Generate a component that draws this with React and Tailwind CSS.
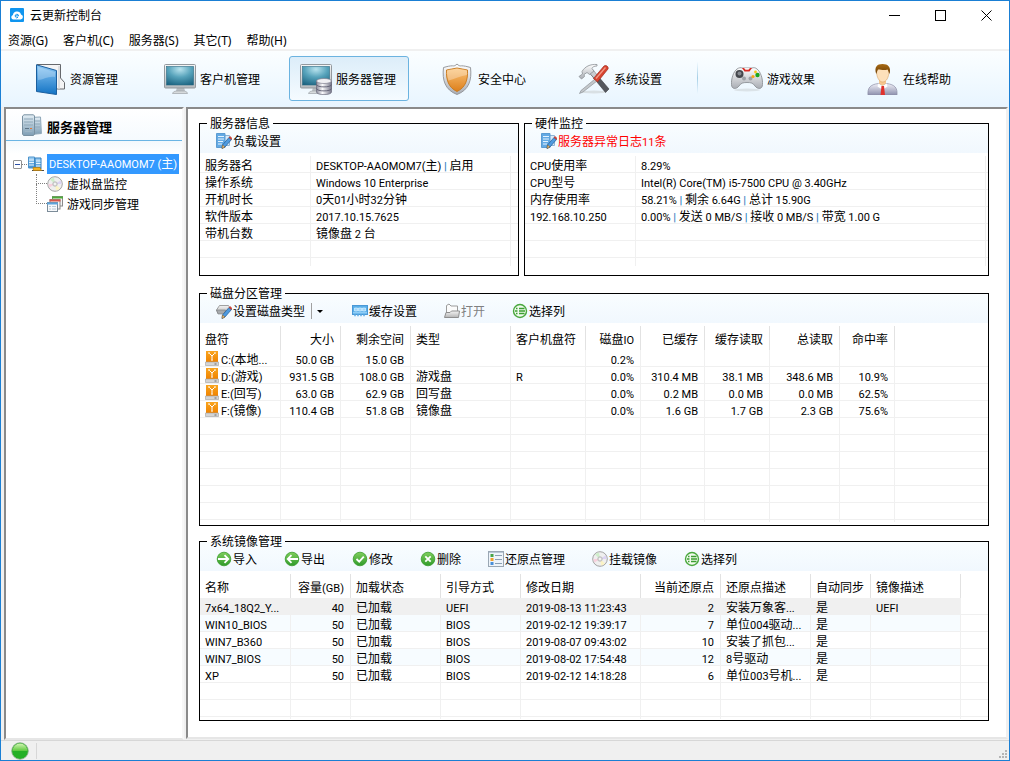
import { Fragment } from 'react'
import clsx from 'clsx'

/* ---------- text ---------- */

// Latin runs are set one size smaller than the Chinese text around them
function Txt({ children }) {
  return children.split(/([\x20-\x7e]+)/).map((part, i) => {
    if (i % 2 === 0) return <Fragment key={i}>{part}</Fragment>
    return (
      <span key={i} className="text-[11px] leading-none whitespace-pre font-[Roboto,sans-serif]">
        {part.split('|').map((s, j) => (
          <Fragment key={j}>
            {j > 0 && <span className="font-bold text-[#2f7fc0]">|</span>}
            {s}
          </Fragment>
        ))}
      </span>
    )
  })
}

/* ---------- icons ---------- */

function Gradients() {
  const vertical = [
    ['gBook', '#8cc8f5', '#1273c4'],
    ['gFrame', '#f6f6f6', '#b4b9bd'],
    ['gOrange', '#fbc377', '#dd7f1b'],
    ['gSilver', '#ffffff', '#a9adb4'],
    ['gSuit', '#f1f1f8', '#8d90ad'],
    ['gGreen', '#7fce5c', '#2f9a2a'],
    ['gDrive', '#f9a51f', '#f08300'],
    ['gServer', '#e3eef5', '#7d9db4'],
    ['gTower', '#a5d3f5', '#3d8fd0'],
    ['gFolder', '#f4f4f4', '#b5b5b5'],
    ['gBall', '#d2f5b4', '#5cc83c'],
    ['gHair', '#a86a14', '#6d3f05'],
  ]
  return (
    <svg className="absolute w-0 h-0" aria-hidden="true">
      <defs>
        {vertical.map(([id, a, b]) => (
          <linearGradient key={id} id={id} x1="0" y1="0" x2="0" y2="1">
            <stop offset="0" stopColor={a} />
            <stop offset="1" stopColor={b} />
          </linearGradient>
        ))}
        <radialGradient id="gScreen" cx="0.5" cy="0.15" r="0.95">
          <stop offset="0" stopColor="#b9e3ee" />
          <stop offset="0.45" stopColor="#57a3bb" />
          <stop offset="1" stopColor="#175f7d" />
        </radialGradient>
        <linearGradient id="gDb" x1="0" y1="0" x2="1" y2="0">
          <stop offset="0" stopColor="#8b8b9b" />
          <stop offset="0.4" stopColor="#fafafc" />
          <stop offset="1" stopColor="#77778a" />
        </linearGradient>
      </defs>
    </svg>
  )
}

function AppIcon() {
  return (
    <svg width="14" height="14" viewBox="0 0 14 14">
      <rect width="14" height="14" rx="1" fill="#0f95ef" />
      <path d="M3.5 11.5a2.3 2.3 0 0 1-.6-4.5A4.2 4.2 0 0 1 11 6.4a2.6 2.6 0 0 1-.4 5.1z" fill="#fff" />
      <path d="M5.2 7.9h3.4a1.7 1.7 0 1 0-.6 1.4" fill="none" stroke="#0f95ef" strokeWidth="1" />
    </svg>
  )
}

function BookIcon() {
  return (
    <svg width="32" height="32" viewBox="0 0 32 32">
      <path d="M3 1.500h23.500v13.500l4 4.500v6.500h-7L3 20z" fill="#f3f4f5" stroke="#66696d" />
      <path d="M25 3v23" stroke="#d5d7d9" strokeWidth="1.500" />
      <path d="M2.500 1.800 22.500 7.500v24L2.500 28.500z" fill="url(#gBook)" stroke="#1b5f9e" />
      <path d="M4 4 21 9v5C14 13 9 17 4 17z" fill="#fff" opacity=".25" />
    </svg>
  )
}

function Monitor() {
  return (
    <>
      <path d="M13 24h7l1 4h-9z" fill="#b9bec2" />
      <path d="M8.500 30.500c1-2.500 3-2.500 7.500-2.500s7 0 7.500 2.500z" fill="#d6dadc" stroke="#9da3a8" strokeWidth=".7" />
      <rect x=".5" y="1.500" width="31" height="23.500" rx="1" fill="url(#gFrame)" stroke="#93999e" />
      <rect x="2.500" y="3.500" width="27" height="18.500" fill="url(#gScreen)" stroke="#2c6c84" strokeWidth=".6" />
    </>
  )
}

function ClientIcon() {
  return (
    <svg width="32" height="32" viewBox="0 0 32 32">
      <Monitor />
    </svg>
  )
}

function ServerIcon() {
  return (
    <svg width="32" height="32" viewBox="0 0 32 32">
      <Monitor />
      <path d="M16.500 18v11c0 3.500 15 3.500 15 0V18z" fill="url(#gDb)" stroke="#6c6c7c" strokeWidth=".7" />
      <path d="M16.500 21.500c0 3.200 15 3.200 15 0M16.500 25.500c0 3.200 15 3.200 15 0" fill="none" stroke="#5e5e70" strokeWidth=".9" />
      <ellipse cx="24" cy="18" rx="7.500" ry="2.500" fill="#f0f0f4" stroke="#80808f" strokeWidth=".7" />
    </svg>
  )
}

function ShieldIcon() {
  const d = 'M15 1c1.500 1.600 3 2.200 4.500 1.800C22 2.800 25 3.500 28.500 4.500 30 17 27 27 15 31.500 3 27 0 17 1.500 4.500 5 3.500 8 2.800 10.500 2.800 12 3.200 13.500 2.600 15 1z'
  return (
    <svg width="32" height="32" viewBox="0 0 32 32">
      <path d={d} fill="url(#gSilver)" stroke="#8d9094" strokeWidth=".9" />
      <path d="M15 5c3.500 1 7 1 10.500 2C26 17 23.500 24.500 15 28.500 6.500 24.500 4 17 4.500 7 8 6 11.500 6 15 5z" fill="url(#gOrange)" stroke="#c77718" strokeWidth=".9" />
      <path d="M15 5.600C11.500 6.600 8 6.600 5 7.500 5 12 5.500 15 6.500 17.500 12 16 19 13 25 12V7.500C22 6.600 18.500 6.600 15 5.600z" fill="#fff" opacity=".3" />
    </svg>
  )
}

function ToolsIcon() {
  return (
    <svg width="32" height="32" viewBox="0 0 32 32">
      <ellipse cx="16" cy="29" rx="13" ry="1.500" fill="#d9e0e4" />
      <path d="m10 8 3.500-2.500L31 26l-3.500 3.500z" fill="#55585e" stroke="#3b3d41" strokeWidth=".6" />
      <path d="M10 8 13.500 5.500 20 13l-3 3z" fill="#c9ccd0" />
      <path d="M1 13.500 4.500 11 4 8.500C7 3.500 12 1 19 1.500L19 3c-3 0-4.500 1-5 2.500l2 2.500-4.500 3.500-2.500-2-3 2 .5 2L3.500 16z" fill="url(#gSilver)" stroke="#8c9096" strokeWidth=".8" />
      <path d="m17 16 2 2L5 29l-3.500 1.500L3 27.500z" fill="#c3c7cb" stroke="#82868b" strokeWidth=".6" />
      <path d="M15.500 15.500 26 3c1.500-1.500 5 .5 4 3L19.500 19z" fill="#d8432f" stroke="#9d2a1b" strokeWidth=".7" />
      <path d="M18 15.500 27.500 4.500" stroke="#f39b88" strokeWidth="1.300" />
    </svg>
  )
}

function GamepadIcon() {
  return (
    <svg width="32" height="32" viewBox="0 0 32 32">
      <ellipse cx="16" cy="27" rx="13" ry="1.500" fill="#dbe3e8" />
      <path d="M6 6C8 4.500 10 4.500 11 5h10c1.500-.6 3.500-.4 5 1C29.500 8.500 32 16 31.500 21.500c0 5-5 5-7.500 1.500C22 20 20 19.500 16 19.500S10 20 8 23C5.500 26.500.5 26.500.5 21.500 0 16 2.500 8.500 6 6z" fill="url(#gSilver)" stroke="#85898e" strokeWidth=".8" />
      <path d="M11 5h10l-2.500 3.500h-5z" fill="#d92b25" />
      <path d="M13 5h6l-1.500 1.800h-3z" fill="#f4f4f4" />
      <circle cx="8.500" cy="11" r="4" fill="#44474c" />
      <circle cx="8.500" cy="10.500" r="2" fill="#85898f" />
      <circle cx="13" cy="15.500" r="2" fill="#9da1a6" />
      <circle cx="19.500" cy="15.500" r="2" fill="#9da1a6" />
      <circle cx="26.500" cy="12" r="2.200" fill="#18a51c" />
      <circle cx="22" cy="13.500" r="1.600" fill="#f5a318" />
      <circle cx="24.500" cy="9" r="1.400" fill="#f5c518" />
    </svg>
  )
}

function PersonIcon() {
  return (
    <svg width="32" height="32" viewBox="0 0 32 32">
      <path d="M12 16h7v5l-3.500 3-3.500-3z" fill="#f5c68f" />
      <path d="M1 32c-.6-7 2-10.500 10.500-11.500l4 3 4-3C28 21.500 30.600 25 30 32z" fill="url(#gSuit)" stroke="#8c8ea6" strokeWidth=".7" />
      <path d="m11.500 20.500 4 2.500 4-2.500 1 3-4 2.500h-2l-4-2.500z" fill="#fff" />
      <path d="M14.500 23h2.500l1 9h-4.500z" fill="#e0312c" />
      <path d="M9.500 8c0-6 12.500-6 12.500 0 0 6-2.500 11-6.200 11S9.500 14 9.500 8z" fill="#fde0ba" stroke="#d9a468" strokeWidth=".6" />
      <path d="M9.200 11C7 4 10 1 15.500 1S24.500 4 22.500 11c-1-2-1-3-2-4.500C17 8 12 6 11 6.500c-1 1.500-1 3-1.800 4.500z" fill="url(#gHair)" />
    </svg>
  )
}

function RackIcon() {
  return (
    <svg width="20" height="22" viewBox="0 0 20 22">
      <path d="M8 3.500 18.500 3l.9 16.500L9 20.500z" fill="url(#gServer)" stroke="#8ea7b8" />
      <path d="M11 7h7M11 10h7M11 13h7" stroke="#8fa8b9" />
      <path d="M.5 2 2 .8h9.500l1 1.200v18l-1 1.500H1.500L.5 20z" fill="url(#gServer)" stroke="#7890a1" />
      <path d="M2 5h9M2 8h9M2 11h9" stroke="#8fa8b9" />
      <path d="M3 14.500h4" stroke="#5e7587" />
      <path d="M8 14.500h2" stroke="#e07a3a" />
      <path d="M3 17.500h7" stroke="#9cb4c4" />
    </svg>
  )
}

function TreeServerIcon() {
  return (
    <svg width="16" height="16" viewBox="0 0 16 16">
      <path d="M.5 1h6v11h-6z" fill="url(#gTower)" stroke="#4c93cc" />
      <path d="M7 2h6v11H7z" fill="url(#gTower)" stroke="#2f7dbd" />
      <path d="M1 4h5M1 6.500h5M1 9h5M8 5h4.500M8 7.500h4.500M8 10h4.500" stroke="#e8f5ff" />
      <path d="M4 14.500h12" stroke="#4a4a4a" />
      <path d="M5 11.500h7l1.500 3h-8z" fill="#f4b223" stroke="#b57a0c" strokeWidth=".7" />
    </svg>
  )
}

function DiscIcon() {
  return (
    <svg width="16" height="16" viewBox="0 0 16 16">
      <circle cx="8" cy="8" r="7.300" fill="#efefef" stroke="#a3a3a3" />
      <path d="M8 8 3 3.500A7 7 0 0 1 7 1.500z" fill="#cfeecb" />
      <path d="m8 8 5.500-3.500A7 7 0 0 1 14.500 8z" fill="#dcd3f3" />
      <path d="m8 8 5 4.500a7 7 0 0 1-4 2z" fill="#fbf3c4" />
      <path d="M8 8 2.500 11.500A7 7 0 0 1 1.500 8z" fill="#f7d0dd" />
      <circle cx="8" cy="8" r="2.300" fill="#d8d8d8" stroke="#b3b3b3" strokeWidth=".7" />
      <circle cx="8" cy="8" r=".9" fill="#fff" />
    </svg>
  )
}

function SyncIcon() {
  return (
    <svg width="16" height="16" viewBox="0 0 16 16">
      <rect x="5.500" y=".5" width="10" height="9.500" fill="#f6f6f6" stroke="#8a8a8a" />
      <path d="M5 1.500h11" stroke="#4faa3a" strokeWidth="2" />
      <rect x="3" y="3.500" width="10" height="9.500" fill="#f6f6f6" stroke="#8a8a8a" />
      <path d="M2.500 4.500h11" stroke="#d8584a" strokeWidth="2" />
      <rect x=".5" y="6.500" width="10" height="9" fill="#f7f9fb" stroke="#7c8c99" />
      <path d="M0 7.500h11" stroke="#5da5dc" strokeWidth="2" />
      <path d="M2 10.500h2M2 13h2M5 10.500h4M5 13h4" stroke="#b9cad6" />
    </svg>
  )
}

function Pencil() {
  return (
    <>
      <path d="m13 4.500 2.500 2-6.500 7.500-3 1.500.5-3.500z" fill="#4f9be0" stroke="#205a94" strokeWidth=".7" />
      <path d="m13 4.500 1-1 2 1.800-.7 1.200z" fill="#e5402f" stroke="#a52a1c" strokeWidth=".5" />
      <path d="m6.500 12 2.500 2-3 1.500z" fill="#f5c27a" stroke="#7a5520" strokeWidth=".5" />
    </>
  )
}

function NoteIcon() {
  return (
    <svg width="16" height="16" viewBox="0 0 16 16">
      <path d="M5.500 2.500h8v10h-8z" fill="#d9eaf8" stroke="#8db4d6" />
      <path d="M.5.500h8.500v14H.5z" fill="#64aae4" stroke="#5c9cd2" />
      <path d="M2 3.500h6M2 6h6M2 8.500h5M2 11h4" stroke="#e4f3ff" />
      <Pencil />
    </svg>
  )
}

function DriveEditIcon() {
  return (
    <svg width="16" height="16" viewBox="0 0 16 16">
      <path d="M3.500 2.500h9l2.500 4-5 4H2L.5 7z" fill="url(#gFolder)" stroke="#8a8a8a" strokeWidth=".8" />
      <path d="M.5 7h9l-1 4H2z" fill="#a8abae" stroke="#77797c" strokeWidth=".6" />
      <Pencil />
    </svg>
  )
}

function CacheIcon() {
  return (
    <svg width="16" height="16" viewBox="0 0 16 16">
      <rect x=".5" y="2.500" width="15" height="9" fill="#58aee9" stroke="#4a98d6" />
      <path d="M2.500 5h3v3h-3zM6.500 5h3v3h-3zM10.500 5h3v3h-3z" fill="#9bd4fa" stroke="#d9f0ff" strokeWidth=".7" />
      <path d="M1 9.800h14" stroke="#a9dbfb" />
      <path d="M2 12.500h12" stroke="#7fc0ee" strokeWidth="1.500" strokeDasharray="2 1" />
    </svg>
  )
}

function FolderIcon() {
  return (
    <svg width="16" height="16" viewBox="0 0 16 16">
      <path d="M2.500 14V2.500L5 1l2 2h6.500v10z" fill="#fbfbfb" stroke="#9b9b9b" />
      <path d="M.5 14.500 2 9.500h4l1.500-1.500h8l-1 6.500z" fill="url(#gFolder)" stroke="#8e8e8e" />
    </svg>
  )
}

function GreenRound({ children }) {
  return (
    <svg width="16" height="16" viewBox="0 0 16 16">
      <circle cx="8" cy="8" r="6.800" fill="url(#gGreen)" stroke="#379a2b" strokeWidth=".8" />
      <g fill="none" stroke="#fff" strokeWidth="1.800">{children}</g>
    </svg>
  )
}

const ImportIcon = () => <GreenRound><path d="M2 8h10M8.500 4.200 12.300 8l-3.800 3.800" /></GreenRound>
const ExportIcon = () => <GreenRound><path d="M14 8H4M7.500 4.200 3.700 8l3.800 3.800" /></GreenRound>
const CheckIcon = () => <GreenRound><path d="m4.500 8 2.700 2.700L11.800 5.700" /></GreenRound>
const DeleteIcon = () => <GreenRound><path d="m5.300 5.300 5.400 5.400M10.700 5.300l-5.400 5.400" /></GreenRound>

function ColumnsIcon() {
  return (
    <svg width="16" height="16" viewBox="0 0 16 16">
      <circle cx="8" cy="8" r="6.500" fill="#f2fbef" stroke="#4aa83e" strokeWidth="1.400" />
      <path d="M4 5.500h1.500M7 5.500h5.500M3 8h2.500M7 8h6M4 10.500h1.500M7 10.500h5.500" stroke="#3c9e32" strokeWidth="1.300" />
    </svg>
  )
}

function RestoreIcon() {
  return (
    <svg width="16" height="16" viewBox="0 0 16 16">
      <rect x=".5" y=".5" width="15" height="15" fill="#eef4fa" stroke="#9aa7b4" />
      <path d="M1 1.500h14" stroke="#b9c8d6" />
      <path d="M2.500 3h3v3h-3z" fill="#47a447" />
      <path d="M2.500 7h3v3h-3z" fill="#f0a12c" />
      <path d="M2.500 11h3v3h-3z" fill="#4a90d9" />
      <path d="M7 4.500h7M7 8.500h7M7 12.500h7" stroke="#8ba0b3" />
    </svg>
  )
}

function DiskIcon() {
  return (
    <svg width="14" height="15" viewBox="0 0 14 15" className="shrink-0">
      <path d="M1 0h12v11H1z" fill="url(#gDrive)" />
      <path d="M.5 11h13v3.500H.5z" fill="#d4d4d4" stroke="#a0a0a0" strokeWidth=".6" />
      <path d="m4.500 2.500 2.500 2.500 2.500-2.500M7 5v3.500" fill="none" stroke="#fff" />
      <path d="M3 2h2M9 2h2M6 9h2" stroke="#fff" />
      <path d="M9.500 13h2" stroke="#6c6c6c" />
    </svg>
  )
}

function StatusBall() {
  return (
    <svg width="18" height="18" viewBox="0 0 18 18">
      <circle cx="9" cy="9" r="8.300" fill="#25b025" stroke="#8fae8a" strokeWidth=".8" />
      <path d="M1.500 9a7.500 7.500 0 0 1 15 0z" fill="url(#gBall)" />
    </svg>
  )
}

/* ---------- window chrome ---------- */

const MENUS = ['资源(G)', '客户机(C)', '服务器(S)', '其它(T)', '帮助(H)']

const TOOLS = [
  { label: '资源管理', icon: BookIcon },
  { label: '客户机管理', icon: ClientIcon },
  { label: '服务器管理', icon: ServerIcon, active: true },
  { label: '安全中心', icon: ShieldIcon },
  { label: '系统设置', icon: ToolsIcon },
  { label: '游戏效果', icon: GamepadIcon, divided: true },
  { label: '在线帮助', icon: PersonIcon },
]

function TitleBar() {
  const btn = 'w-[46px] h-7 flex items-center justify-center hover:bg-gray-200'
  return (
    <header className="flex items-center h-7 pl-[9px]">
      <AppIcon />
      <h1 className="ml-[6px] pt-0.5 flex-1">云更新控制台</h1>
      <button className={btn} aria-label="最小化">
        <svg width="11" height="11"><path d="M0 5.500h11" stroke="#000" /></svg>
      </button>
      <button className={btn} aria-label="最大化">
        <svg width="11" height="11"><rect x=".5" y=".5" width="10" height="10" fill="none" stroke="#000" /></svg>
      </button>
      <button className={btn} aria-label="关闭">
        <svg width="11" height="11"><path d="m.5.500 10 10M10.500.500l-10 10" stroke="#000" /></svg>
      </button>
    </header>
  )
}

function MenuBar() {
  return (
    <nav className="flex items-center gap-[15px] h-[22px] pt-1 pl-[7px] border-b-2 border-[#f0f0f0]">
      {MENUS.map(m => <button key={m}>{m}</button>)}
    </nav>
  )
}

function MainToolbar() {
  return (
    <div className="flex items-start h-14 pt-[5px] pl-4 bg-linear-to-b from-[#fbfeff] to-[#e8f5ff]">
      {TOOLS.map(({ label, icon: Icon, active, divided }) => (
        <Fragment key={label}>
          {divided && <span className="w-px h-8 mt-[6px] mr-4 bg-linear-to-b from-[#f4fbff] via-[#a5cfe6] to-[#edf7ff]" />}
          <button
            className={clsx(
              'w-[120px] h-[45px] mr-4 pr-0.5 flex items-center justify-center gap-1 rounded-[3px] border',
              active ? 'border-[#6bb3e0] bg-linear-to-b from-[#dcedf9] to-[#f5fbff]' : 'border-transparent',
            )}
          >
            <Icon />
            <span className="pt-0.5">{label}</span>
          </button>
        </Fragment>
      ))}
    </div>
  )
}

/* ---------- sidebar ---------- */

function Sidebar() {
  const sunken = 'border-2 border-t-[#8a8a8a] border-l-[#8a8a8a] border-r-[#f7f7f7] border-b-[#e6e6e6]'
  return (
    <aside className={clsx('w-[180px] shrink-0 bg-white', sunken)}>
      <div className="flex items-center gap-[5px] h-8 pl-4 border-b border-[#6bb5e4] bg-linear-to-b from-white to-[#f5fafe]">
        <RackIcon />
        <h2 className="pt-1 text-[13px] font-bold">服务器管理</h2>
      </div>
      <div className="h-[13px] bg-linear-to-b from-[#f3f9fd] to-white" />
      <ul className="pl-[7px]">
        <li>
          <div className="flex items-center h-5">
            <button aria-label="折叠" className="w-[9px] h-[9px] border border-[#919191] rounded-[1px] flex items-center justify-center">
              <span className="w-[5px] h-px bg-[#2c4fa5]" />
            </button>
            <span className="w-[5px] mr-px border-t border-dotted border-[#808080]" />
            <TreeServerIcon />
            <a href="#server" className="ml-[3px] px-[2px] h-5 leading-5 bg-[#3399ff] text-white whitespace-nowrap">
              <Txt>DESKTOP-AAOMOM7 (主)</Txt>
            </a>
          </div>
          <ul className="pl-[23px]">
            {[['虚拟盘监控', DiscIcon], ['游戏同步管理', SyncIcon]].map(([label, Icon], i) => (
              <li key={label} className="flex items-center h-5">
                <span className={clsx('w-[11px] border-l border-b border-dotted border-[#808080] self-start', i ? 'h-5 -mt-[10px]' : 'h-[10px]')} />
                <Icon />
                <a href="#node" className="ml-1 pt-0.5">{label}</a>
              </li>
            ))}
          </ul>
        </li>
      </ul>
    </aside>
  )
}

/* ---------- panels ---------- */

function Group({ title, className, children }) {
  return (
    <fieldset className={clsx('min-w-0 border border-black', className)}>
      <legend className="h-px leading-[1px] ml-[7px] px-[3px] whitespace-nowrap">{title}</legend>
      {children}
    </fieldset>
  )
}

function Bar({ children }) {
  return (
    <div className="flex gap-[27px] h-[29px] pt-[9px] pl-4 mb-[3px] bg-linear-to-b from-[#f9fdff] to-[#f1f8fe]">
      {children}
    </div>
  )
}

function BarBtn({ icon: Icon, children, className, ...rest }) {
  return (
    <button className={clsx('flex items-center gap-px h-4 whitespace-nowrap', className)} {...rest}>
      <Icon />
      <span className="pt-0.5"><Txt>{children}</Txt></span>
    </button>
  )
}

const LINE = 'border-[#f0f0f0]'
const CELL = 'pl-[5px] pt-1 leading-3 whitespace-nowrap'

function InfoTable({ rows, wide }) {
  const all = [...rows, ...Array(6 - rows.length).fill(['', ''])]
  return (
    <table className="w-full table-fixed border-separate border-spacing-0 mb-[9px]">
      <colgroup>
        <col className="w-[111px]" />
        <col className={wide ? 'w-auto' : 'w-[200px]'} />
        <col className={wide ? 'w-[2px]' : 'w-auto'} />
      </colgroup>
      <tbody>
        {all.map(([k, v], i) => (
          <tr key={i} className="h-[17px]">
            <th scope="row" className={clsx(CELL, LINE, 'text-left font-normal border-r border-b')}><Txt>{k}</Txt></th>
            <td className={clsx(CELL, LINE, 'border-r border-b')}><Txt>{v}</Txt></td>
            <td className={clsx('border-b', LINE)} />
          </tr>
        ))}
        <tr className="h-2">
          <td className={clsx('border-r', LINE)} />
          <td className={clsx('border-r', LINE)} />
          <td />
        </tr>
      </tbody>
    </table>
  )
}

function ListTable({ cols, rows, total, selected, striped, rowIcon: RowIcon }) {
  const blank = Array(total - rows.length).fill(cols.map(() => ''))
  return (
    <table className="w-full table-fixed border-separate border-spacing-0">
      <colgroup>
        {cols.map(c => <col key={c.label} className={c.w} />)}
        <col />
      </colgroup>
      <thead>
        <tr className="h-6">
          {cols.map(c => (
            <th
              key={c.label}
              className={clsx(CELL, 'font-normal border-r border-[#e2e2e2]', c.right ? 'text-right pr-[6px]' : 'text-left')}
            >
              <Txt>{c.label}</Txt>
            </th>
          ))}
          <th />
        </tr>
      </thead>
      <tbody>
        {[...rows, ...blank].map((row, i) => (
          <tr key={i} className="h-[17px]">
            {row.map((cell, j) => (
              <td
                key={j}
                className={clsx(
                  CELL,
                  LINE,
                  'border-r border-b',
                  cols[j].right ? 'text-right pr-[6px]' : 'text-left',
                  selected === i && 'bg-[#f0f0f0]',
                  striped && i < rows.length && i % 2 === 1 && 'bg-[#f7fcff]',
                )}
              >
                {RowIcon && j === 0 && cell
                  ? <span className="flex items-end gap-[2px] h-3"><RowIcon /><span><Txt>{cell}</Txt></span></span>
                  : <Txt>{cell}</Txt>}
              </td>
            ))}
            <td className={clsx('border-b', LINE)} />
          </tr>
        ))}
        <tr className="h-[2px]">
          {cols.map(c => <td key={c.label} className={clsx('border-r', LINE)} />)}
          <td />
        </tr>
      </tbody>
    </table>
  )
}

const SERVER_INFO = [
  ['服务器名', 'DESKTOP-AAOMOM7(主) | 启用'],
  ['操作系统', 'Windows 10 Enterprise'],
  ['开机时长', '0天01小时32分钟'],
  ['软件版本', '2017.10.15.7625'],
  ['带机台数', '镜像盘 2 台'],
]

const HARDWARE = [
  ['CPU使用率', '8.29%'],
  ['CPU型号', 'Intel(R) Core(TM) i5-7500 CPU @ 3.40GHz'],
  ['内存使用率', '58.21% | 剩余 6.64G | 总计 15.90G'],
  ['192.168.10.250', '0.00% | 发送 0 MB/S | 接收 0 MB/S | 带宽 1.00 G'],
]

const DISK_COLS = [
  { label: '盘符', w: 'w-[81px]' },
  { label: '大小', w: 'w-[60px]', right: true },
  { label: '剩余空间', w: 'w-[70px]', right: true },
  { label: '类型', w: 'w-[100px]' },
  { label: '客户机盘符', w: 'w-[75px]' },
  { label: '磁盘IO', w: 'w-[55px]', right: true },
  { label: '已缓存', w: 'w-[64px]', right: true },
  { label: '缓存读取', w: 'w-[65px]', right: true },
  { label: '总读取', w: 'w-[70px]', right: true },
  { label: '命中率', w: 'w-[55px]', right: true },
]

const DISKS = [
  ['C:(本地...', '50.0 GB', '15.0 GB', '', '', '0.2%', '', '', '', ''],
  ['D:(游戏)', '931.5 GB', '108.0 GB', '游戏盘', 'R', '0.0%', '310.4 MB', '38.1 MB', '348.6 MB', '10.9%'],
  ['E:(回写)', '63.0 GB', '62.9 GB', '回写盘', '', '0.0%', '0.2 MB', '0.0 MB', '0.0 MB', '62.5%'],
  ['F:(镜像)', '110.4 GB', '51.8 GB', '镜像盘', '', '0.0%', '1.6 GB', '1.7 GB', '2.3 GB', '75.6%'],
]

const IMAGE_COLS = [
  { label: '名称', w: 'w-[91px]' },
  { label: '容量(GB)', w: 'w-[60px]', right: true },
  { label: '加载状态', w: 'w-[90px]' },
  { label: '引导方式', w: 'w-[80px]' },
  { label: '修改日期', w: 'w-[120px]' },
  { label: '当前还原点', w: 'w-[80px]', right: true },
  { label: '还原点描述', w: 'w-[90px]' },
  { label: '自动同步', w: 'w-[60px]' },
  { label: '镜像描述', w: 'w-[90px]' },
]

const IMAGES = [
  ['7x64_18Q2_Y...', '40', '已加载', 'UEFI', '2019-08-13 11:23:43', '2', '安装万象客...', '是', 'UEFI'],
  ['WIN10_BIOS', '50', '已加载', 'BIOS', '2019-02-12 19:39:17', '7', '单位004驱动...', '是', ''],
  ['WIN7_B360', '50', '已加载', 'BIOS', '2019-08-07 09:43:02', '10', '安装了抓包...', '是', ''],
  ['WIN7_BIOS', '50', '已加载', 'BIOS', '2019-08-02 17:54:48', '12', '8号驱动', '是', ''],
  ['XP', '50', '已加载', 'BIOS', '2019-02-12 14:18:28', '6', '单位003号机...', '是', ''],
]

function Content() {
  return (
    <main className="flex-1 min-w-0 mb-px pt-[14px] pl-[11px] pr-[17px] bg-white border-2 border-t-[#8a8a8a] border-l-[#8a8a8a] border-r-[#f0f0f0] border-b-[#e6e6e6]">
      <div className="flex gap-[5px]">
        <Group title="服务器信息" className="w-[320px] shrink-0">
          <Bar><BarBtn icon={NoteIcon}>负载设置</BarBtn></Bar>
          <InfoTable rows={SERVER_INFO} />
        </Group>
        <Group title="硬件监控" className="flex-1">
          <Bar><BarBtn icon={NoteIcon} className="text-[#ff0000]">服务器异常日志11条</BarBtn></Bar>
          <InfoTable rows={HARDWARE} wide />
        </Group>
      </div>

      <Group title="磁盘分区管理" className="mt-[17px] pb-[3px]">
        <Bar>
          <div className="flex items-center h-4 mr-[2px]">
            <BarBtn icon={DriveEditIcon}>设置磁盘类型</BarBtn>
            <button aria-label="更多" className="ml-[6px] pl-[5px] h-4 border-l border-[#a0a0a0]">
              <svg width="6" height="3"><path d="M0 0h6L3 3z" /></svg>
            </button>
          </div>
          <BarBtn icon={CacheIcon}>缓存设置</BarBtn>
          <BarBtn icon={FolderIcon} className="text-[#808080]" disabled>打开</BarBtn>
          <BarBtn icon={ColumnsIcon}>选择列</BarBtn>
        </Bar>
        <ListTable cols={DISK_COLS} rows={DISKS} total={10} rowIcon={DiskIcon} />
      </Group>

      <Group title="系统镜像管理" className="mt-[15px] pb-px">
        <Bar>
          <BarBtn icon={ImportIcon}>导入</BarBtn>
          <BarBtn icon={ExportIcon}>导出</BarBtn>
          <BarBtn icon={CheckIcon}>修改</BarBtn>
          <BarBtn icon={DeleteIcon}>删除</BarBtn>
          <BarBtn icon={RestoreIcon}>还原点管理</BarBtn>
          <BarBtn icon={DiscIcon}>挂载镜像</BarBtn>
          <BarBtn icon={ColumnsIcon}>选择列</BarBtn>
        </Bar>
        <ListTable cols={IMAGE_COLS} rows={IMAGES} total={7} selected={0} striped />
      </Group>
    </main>
  )
}

function StatusBar() {
  return (
    <footer className="flex items-center h-5 pl-[10px] border-t border-[#d7d7d7] bg-[#f0f0f0]">
      <StatusBall />
      <span className="ml-[7px] w-px h-4 bg-[#d7d7d7]" />
      <svg width="10" height="10" className="ml-auto self-end mr-px mb-px" fill="#b5b5b5">
        <path d="M7 1h2v2H7zM4 4h2v2H4zM7 4h2v2H7zM1 7h2v2H1zM4 7h2v2H4zM7 7h2v2H7z" />
      </svg>
    </footer>
  )
}

export default function App() {
  return (
    <div className="min-h-screen flex flex-col border border-[#1a7fd4] bg-white text-black text-[12px] leading-4 font-['Noto_Sans','Noto_Sans_CJK_SC',sans-serif]">
      <Gradients />
      <TitleBar />
      <MenuBar />
      <MainToolbar />
      <div className="flex-1 flex gap-[2px] pl-[3px] pr-px bg-[#f0f0f0]">
        <Sidebar />
        <Content />
      </div>
      <StatusBar />
    </div>
  )
}
